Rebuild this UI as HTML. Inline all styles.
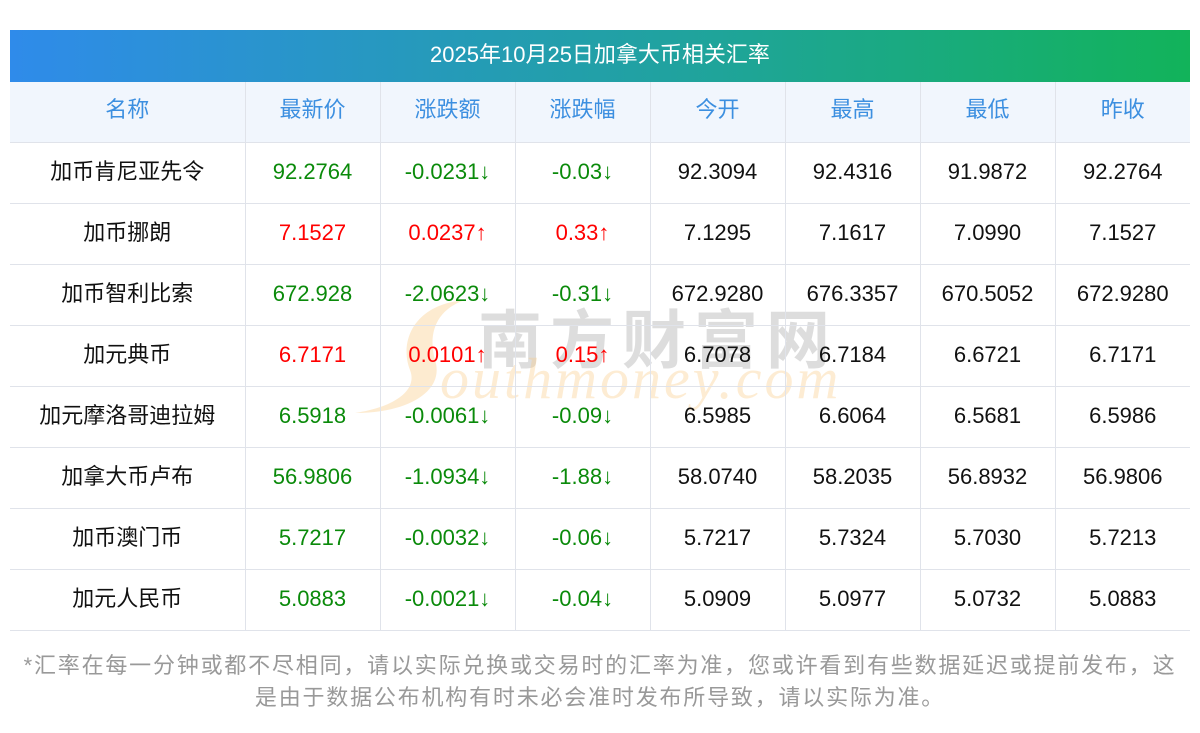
<!DOCTYPE html>
<html><head><meta charset="utf-8"><style>
body{margin:0;width:1200px;height:733px;background:#fff;font-family:"Liberation Sans","Noto Sans CJK SC",sans-serif;position:relative;overflow:hidden}
.title{position:absolute;left:10px;top:30px;width:1180px;height:52px;background:linear-gradient(90deg,#2f8bea,#1fa49a 60%,#12b35a);color:#fff;font-size:22px;line-height:50px;text-align:center}
table{position:absolute;left:10px;top:82px;width:1180px;border-collapse:collapse;table-layout:fixed}
td{border:1px solid #e0e3ea;height:58px;text-align:center;font-size:22px;line-height:24px;color:#111;padding:0 0 2px 0}
tr:first-child td{background:#f1f6fd;color:#3c8fe0;border-top:none;height:56px;padding-bottom:4px}
td:first-child{border-left:none}td:last-child{border-right:none}
.g{color:#0a8a0a}.r{color:#f00}
.note{position:absolute;left:0;top:650px;width:1200px;text-align:center;color:#999;font-size:22px;line-height:32px;letter-spacing:1.8px}
.wm{position:absolute;pointer-events:none}
</style></head><body>
<div class="title">2025年10月25日加拿大币相关汇率</div>
<svg class="wm" style="left:350px;top:295px" width="140" height="125"><path d="M115 5 C60 10 50 50 60 75 C68 95 45 112 5 118 C60 118 95 95 85 65 C78 40 85 15 115 5Z" fill="#fde6c4" opacity="0.8"/></svg>
<div class="wm" style="left:478px;top:290px;font-size:64px;color:rgba(150,150,150,0.32);letter-spacing:8px;font-weight:bold">南方财富网</div>
<div class="wm" style="left:440px;top:345px;font-size:58px;color:rgba(250,200,130,0.35);font-style:italic;font-family:'Liberation Serif',serif;letter-spacing:3px">outhmoney.com</div>
<table>
<colgroup><col style="width:235px"><col style="width:135px"><col style="width:135px"><col style="width:135px"><col style="width:135px"><col style="width:135px"><col style="width:135px"><col style="width:135px"></colgroup>
<tr><td>名称</td><td>最新价</td><td>涨跌额</td><td>涨跌幅</td><td>今开</td><td>最高</td><td>最低</td><td>昨收</td></tr>
<tr><td>加币肯尼亚先令</td><td class="g">92.2764</td><td class="g">-0.0231↓</td><td class="g">-0.03↓</td><td>92.3094</td><td>92.4316</td><td>91.9872</td><td>92.2764</td></tr>
<tr><td>加币挪朗</td><td class="r">7.1527</td><td class="r">0.0237↑</td><td class="r">0.33↑</td><td>7.1295</td><td>7.1617</td><td>7.0990</td><td>7.1527</td></tr>
<tr><td>加币智利比索</td><td class="g">672.928</td><td class="g">-2.0623↓</td><td class="g">-0.31↓</td><td>672.9280</td><td>676.3357</td><td>670.5052</td><td>672.9280</td></tr>
<tr><td>加元典币</td><td class="r">6.7171</td><td class="r">0.0101↑</td><td class="r">0.15↑</td><td>6.7078</td><td>6.7184</td><td>6.6721</td><td>6.7171</td></tr>
<tr><td>加元摩洛哥迪拉姆</td><td class="g">6.5918</td><td class="g">-0.0061↓</td><td class="g">-0.09↓</td><td>6.5985</td><td>6.6064</td><td>6.5681</td><td>6.5986</td></tr>
<tr><td>加拿大币卢布</td><td class="g">56.9806</td><td class="g">-1.0934↓</td><td class="g">-1.88↓</td><td>58.0740</td><td>58.2035</td><td>56.8932</td><td>56.9806</td></tr>
<tr><td>加币澳门币</td><td class="g">5.7217</td><td class="g">-0.0032↓</td><td class="g">-0.06↓</td><td>5.7217</td><td>5.7324</td><td>5.7030</td><td>5.7213</td></tr>
<tr><td>加元人民币</td><td class="g">5.0883</td><td class="g">-0.0021↓</td><td class="g">-0.04↓</td><td>5.0909</td><td>5.0977</td><td>5.0732</td><td>5.0883</td></tr>
</table>
<div class="note">*汇率在每一分钟或都不尽相同，请以实际兑换或交易时的汇率为准，您或许看到有些数据延迟或提前发布，这<br>是由于数据公布机构有时未必会准时发布所导致，请以实际为准。</div>
</body></html>
